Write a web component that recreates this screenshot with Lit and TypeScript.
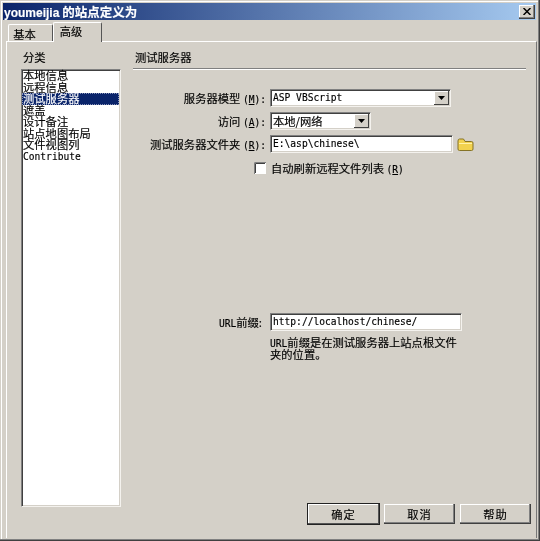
import { LitElement, html, css } from "lit";
import { customElement } from "lit/decorators.js";

const arrow = html`<svg class="arr" width="7" height="4" viewBox="0 0 7 4"><path d="M0 0h7L3.5 4z" fill="#000"/></svg>`;

@customElement("app-root")
export class AppRoot extends LitElement {
  static styles = css`
    :host {
      display: block; width: 540px; height: 541px; overflow: hidden;
      font-family: "Noto Sans CJK SC", sans-serif; font-size: 11.3px; color: #000;
      -webkit-text-stroke: 0.15px currentColor;
    }
    * { box-sizing: border-box; }
    .l { font-family: "DejaVu Sans Mono", monospace; font-size: 9.6px; line-height: 0; }
    .win {
      width: 540px; height: 541px; background: #d4d0c8; padding: 3px 3px 0 3px;
      box-shadow: inset -1px -1px 0 #404040, inset -2px -2px 0 #808080, inset 1px 1px 0 #d4d0c8, inset 2px 2px 0 #fff;
      filter: blur(0.3px);
    }
    .title {
      height: 17px; display: flex; align-items: center; justify-content: space-between;
      padding: 0 1px 0 1px; color: #fff; font-weight: 700; font-size: 12.500px;
      background: linear-gradient(90deg, #0a246a, #a6caf0);
      width: 533px;
    }
    .title .n { font-family: "Liberation Sans", sans-serif; font-size: 12px; font-weight: 700; }
    .x {
      width: 16px; height: 14px; background: #d4d0c8; display: flex; align-items: center; justify-content: center;
      box-shadow: inset -1px -1px 0 #404040, inset -2px -2px 0 #808080, inset 1px 1px 0 #fff;
    }
    .tabs { height: 22px; display: flex; align-items: flex-end; padding-left: 5px; position: relative; z-index: 1; margin-bottom: -1px; }
    .tab {
      display: flex; align-items: center; justify-content: center; line-height: 1; background: #d4d0c8;
      border-left: 1px solid #fff; border-top: 1px solid #fff; border-right: 1px solid #555; border-radius: 2px 2px 0 0;
    }
    .t1 { width: 45px; height: 17px; margin-bottom: 1px; padding: 3px 12px 0 0; }
    .t2 { width: 49px; height: 20px; padding: 0 13px 1px 0; }
    .pane {
      width: 531px; height: 497px; margin-left: 3px; display: flex; gap: 12px; padding: 9px 5px 0 14px;
      border-top: 1px solid #fff; border-left: 1px solid #fff; border-right: 1px solid #777;
    }
    .left { width: 100px; display: flex; flex-direction: column; padding-bottom: 31px; }
    .cap { line-height: 12px; margin: 0 0 6px 2px; height: 12px; }
    .well {
      background: #fff; border: 1px solid; border-color: #808080 #f4f2ee #f4f2ee #808080;
      box-shadow: inset 1px 1px 0 #404040, inset -1px -1px 0 #d4d0c8;
    }
    .list { flex: 1; padding: 0 1px 0 0; }
    .item { height: 11.5px; line-height: 11.5px; padding-left: 1px; white-space: nowrap; }
    .item.l { line-height: 11.5px; }
    .item.sel { background: #0a246a; color: #fff; outline: 1px dotted #8a94b8; outline-offset: -1px; }
    .right { flex: 1; display: flex; flex-direction: column; padding-bottom: 14px; min-width: 0; }
    .head {
      height: 18px; line-height: 13px; margin-right: 5px; padding-left: 2px;
      border-bottom: 1px solid #808080; box-shadow: 0 1px 0 #fff;
    }
    .form { display: grid; grid-template-columns: 133px 1fr; column-gap: 4px; row-gap: 5px; margin-top: 20px; align-items: center; }
    .lab { text-align: right; white-space: nowrap; line-height: 14px; }
    .lab.url { padding-right: 4px; }
    .ctl { height: 18px; display: flex; align-items: center; justify-content: space-between; padding-left: 2px; white-space: nowrap; }
    .ctl .l { line-height: 14px; }
    .w1 { width: 181px; } .w2 { width: 101px; } .w3 { width: 183px; } .w4 { width: 192px; }
    .drop {
      width: 15px; height: 14px; margin-right: 1px; background: #d4d0c8; display: flex; align-items: center; justify-content: center;
      box-shadow: inset -1px -1px 0 #404040, inset 1px 1px 0 #fff;
    }
    .fold { display: flex; align-items: center; gap: 4px; }
    .chk { grid-column: 2; display: flex; align-items: center; height: 18px; margin-left: -16px; gap: 5px; padding-top: 1px; }
    .box { width: 12px; height: 12px; }
    .url-row { margin-top: 132px; }
    .help { grid-column: 2; line-height: 12px; width: 196px; margin-top: 0; }
    .foot { margin-top: auto; display: flex; gap: 5px; justify-content: flex-end; }
    .btn {
      width: 71px; height: 20px; background: #d4d0c8; display: flex; align-items: center; justify-content: center; letter-spacing: 1px;
      box-shadow: inset -1px -1px 0 #404040, inset -2px -2px 0 #808080, inset 1px 1px 0 #fff;
    }
    .btn.def { outline: 1px solid #222; box-shadow: inset -1px -1px 0 #555, inset 1px 1px 0 #fff; }
  `;

  render() {
    const items = ["本地信息", "远程信息", "测试服务器", "遮盖", "设计备注", "站点地图布局", "文件视图列"];
    return html`<div class="win">
      <div class="title">
        <span><span class="n">youmeijia</span> 的站点定义为</span>
        <div class="x"><svg width="8" height="7" viewBox="0 0 8 7"><path d="M0.5 0L7.5 7M7.5 0L.5 7" stroke="#000" stroke-width="1.5"/></svg></div>
      </div>
      <div class="tabs"><div class="tab t1">基本</div><div class="tab t2">高级</div></div>
      <div class="pane">
        <div class="left">
          <div class="cap">分类</div>
          <div class="well list">
            ${items.map((t, i) => html`<div class="item ${i === 2 ? "sel" : ""}">${t}</div>`)}
            <div class="item l">Contribute</div>
          </div>
        </div>
        <div class="right">
          <div class="head">测试服务器</div>
          <div class="form">
            <div class="lab">服务器模型 <span class="l">(<u>M</u>):</span></div>
            <div class="well ctl w1"><span class="l">ASP VBScript</span><div class="drop">${arrow}</div></div>
            <div class="lab">访问 <span class="l">(<u>A</u>):</span></div>
            <div class="well ctl w2"><span>本地/网络</span><div class="drop">${arrow}</div></div>
            <div class="lab">测试服务器文件夹 <span class="l">(<u>R</u>):</span></div>
            <div class="fold">
              <div class="well ctl w3"><span class="l">E:\\asp\\chinese\\</span></div>
              <svg width="17" height="13" viewBox="0 0 17 13">
                <path d="M1 3V11Q1 12.500 2.500 12.500H14.500Q16 12.500 16 11V5Q16 3.500 14.500 3.500H8L6.500 1H2.500Q1 1 1 3Z" fill="#f2d24e" stroke="#857326"/>
                <path d="M2 5.500H15" stroke="#fff2a8"/>
              </svg>
            </div>
            <div class="chk">
              <svg class="box" viewBox="0 0 12 12"><rect width="12" height="12" fill="#fff"/><path d="M.5 12V.5H12" fill="none" stroke="#808080"/><path d="M1.500 11V1.500H11" fill="none" stroke="#404040"/></svg>
              <span>自动刷新远程文件列表 <span class="l">(<u>R</u>)</span></span>
            </div>
            <div class="lab url url-row"><span class="l">URL</span>前缀:</div>
            <div class="well ctl w4 url-row"><span class="l">http://localhost/chinese/</span></div>
            <div class="help"><span class="l">URL</span>前缀是在测试服务器上站点根文件<br>夹的位置。</div>
          </div>
          <div class="foot">
            <div class="btn def">确定</div><div class="btn">取消</div><div class="btn">帮助</div>
          </div>
        </div>
      </div>
    </div>`;
  }
}
